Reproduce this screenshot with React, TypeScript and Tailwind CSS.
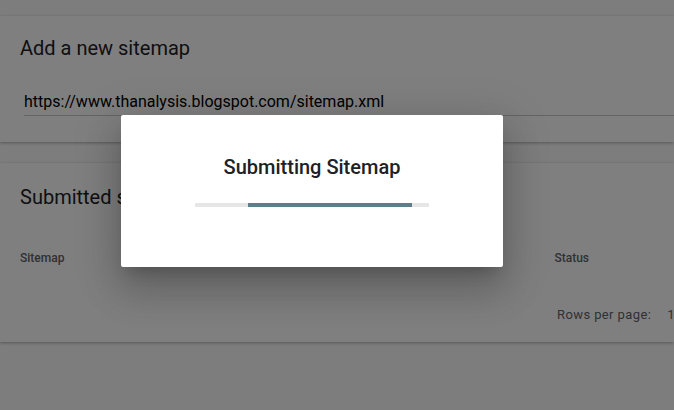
const App = () => {
  return (
    <div className="relative h-[410px] w-[674px] overflow-hidden bg-[#fafafa] font-['Roboto',sans-serif]">
      <div className="flex flex-col pt-[16px]">
        <div className="bg-white shadow-[0_1px_3px_rgba(0,0,0,0.3)] h-[126px] pl-[20px] pt-[20px]">
          <h2 className="text-[20px] leading-[24px] text-[#202124]">Add a new sitemap</h2>
          <div className="mt-[30px] ml-[4px] border-b border-[#c8c8c8] pb-[1px]">
            <span className="text-[16px] leading-[20px] text-black">https://www.thanalysis.blogspot.com/sitemap.xml</span>
          </div>
        </div>
        <div className="mt-[21px] bg-white shadow-[0_1px_3px_rgba(0,0,0,0.3)] h-[179px] px-[20px] pt-[22px]">
          <h2 className="text-[20px] leading-[24px] text-[#202124]">Submitted sitemaps</h2>
          <div className="mt-[41px] flex text-[12px] leading-[16px] font-medium text-[#5f6368]">
            <span>Sitemap</span>
            <span className="ml-[490px]">Status</span>
          </div>
          <div className="mt-[41px] flex text-[13px] leading-[16px] text-[#5f6368] whitespace-nowrap">
            <span className="ml-[537px] tracking-[0.4px]">Rows per page:</span>
            <span className="ml-[16px]">10</span>
          </div>
        </div>
      </div>

      <div className="absolute inset-0 bg-black/50" />

      <div className="absolute left-[121px] top-[115px] w-[382px] h-[152px] rounded-[2px] bg-white shadow-[0_11px_15px_-7px_rgba(0,0,0,0.2),0_24px_38px_3px_rgba(0,0,0,0.14),0_9px_46px_8px_rgba(0,0,0,0.12)] flex flex-col items-center pt-[40px]">
        <h3 className="text-[20px] leading-[24px] font-medium text-[#202124]">Submitting Sitemap</h3>
        <div className="relative mt-[24px] h-[4px] w-[234px] bg-[#e6e6e6]">
          <div className="absolute left-[53px] top-0 h-[4px] w-[164px] bg-[#607d8b]" />
        </div>
      </div>
    </div>
  );
};

export default App;
